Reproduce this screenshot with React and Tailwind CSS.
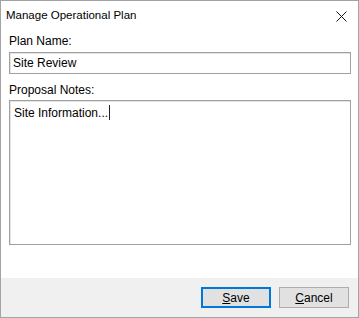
export default function App() {
  return (
    <div className="w-[359px] h-[318px] bg-white" style={{ fontFamily: '"Liberation Sans", Arial, sans-serif' }}>
      <div className="w-full h-full border border-[#a3a3a3] flex flex-col text-black">
        <div className="h-[30px] flex items-center justify-between pl-[5px] pr-[11px]">
          <span className="text-[11.5px]">Manage Operational Plan</span>
          <svg width="11" height="11" viewBox="0 0 11 11" className="mt-[1px]">
            <path d="M0.5 0.5 L10.5 10.5 M10.5 0.5 L0.5 10.5" stroke="#111" strokeWidth="1" />
          </svg>
        </div>
        <div className="pl-[8px] pr-[7px] flex flex-col text-[12px] leading-[14px]">
          <div className="mt-[3px]">Plan Name:</div>
          <div className="mt-[4px] h-[22px] border border-[#a0a0a0] shadow-[inset_1px_1px_0_#e3e3e3] flex items-center px-[3px]">
            Site Review
          </div>
          <div className="mt-[9px]">Proposal Notes:</div>
          <div className="mt-[3px] h-[145px] border border-[#a0a0a0] shadow-[inset_1px_1px_0_#e3e3e3] px-[4px] pt-[4px]">
            <span>Site Information...</span>
            <span className="inline-block w-px h-[15px] bg-[#222] align-[-3px] ml-px" />
          </div>
        </div>
        <div className="flex-1" />
        <div className="h-[39px] bg-[#f0f0f0] flex justify-end items-start pt-[9px] pr-[9px] gap-[8px] text-[12px]">
          <button className="w-[70px] h-[21px] bg-[#e1e1e1] border-2 border-[#0078d7] flex items-center justify-center">
            <span><span className="underline">S</span>ave</span>
          </button>
          <button className="w-[70px] h-[21px] bg-[#e1e1e1] border border-[#adadad] flex items-center justify-center">
            <span><span className="underline">C</span>ancel</span>
          </button>
        </div>
      </div>
    </div>
  );
}
